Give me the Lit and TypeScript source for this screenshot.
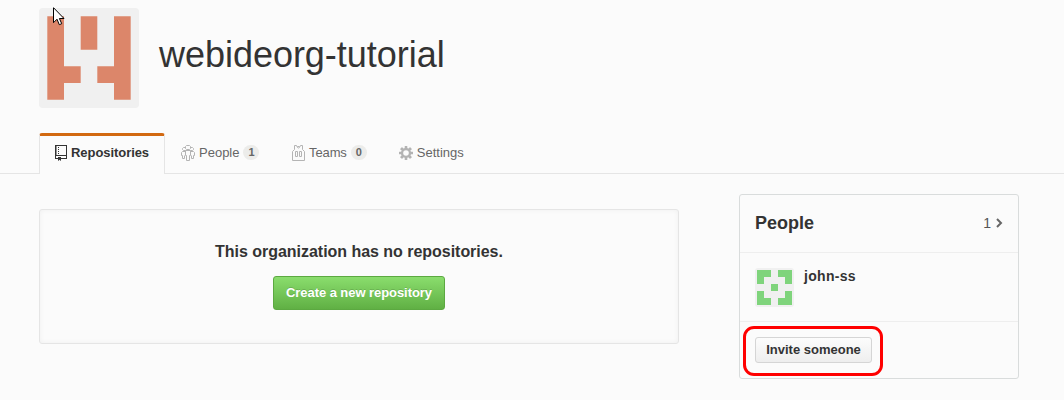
import { LitElement, html, css, svg } from "lit";
import { customElement } from "lit/decorators.js";

const repoIcon = html`<svg width="12" height="16" viewBox="0 0 12 16"><path fill="#333" fill-rule="evenodd" d="M0 0h12v14H6v2l-1.500-1.300L3 16v-2H0zM1.500 1v9H11V1zM1 11v2h2v-1h3v1h5v-2z"/><path fill="#333" d="M3 2h1v1H3zm0 2h1v1H3zm0 2h1v1H3zm0 2h1v1H3z"/></svg>`;

const peopleIcon = html`<svg width="14" height="16" viewBox="0 0 14 16" fill="none" stroke="#b4b4b4"><path d="M5.500.5h3l1 1v2l-1 1h-3l-1-1v-2zM4.500 2.500h-2l-1 1v1l1 1h2M9.500 2.500h2l1 1v1l-1 1h-2M4.500 5.500h5v5h-1v5h-3v-5h-1zM4.500 6.500h-3l-1 1v3h1v3h2v-3M9.500 6.500h3l1 1v3h-1v3h-2v-3"/></svg>`;

const teamsIcon = html`<svg width="13" height="16" viewBox="0 0 13 16" fill="none" stroke="#b4b4b4"><path d="M2.500.5h2l1 1h2l1-1h2v4l2 2v9H.5v-9l2-2zM3.500 6.500h2v5h-2zM7.500 6.500h2v5h-2z"/><path d="M4.500 1.500l2 1.500 2-1.500"/></svg>`;

const gearIcon = html`<svg width="14" height="14" viewBox="-7 -7 14 14"><g fill="#b3b3b3">${[0, 45, 90, 135].map((a) => svg`<rect x="-1.300" y="-7" width="2.600" height="14" rx=".3" transform="rotate(${a})"/>`)}<circle r="5.100"/></g><circle r="2.800" fill="#fbfbfb"/></svg>`;

@customElement("app-root")
export class AppRoot extends LitElement {
  static styles = css`
    :host { display: block; position: relative; height: 400px; overflow: hidden; background: #fbfbfb; color: #333; font: 13px/18px "Liberation Sans", Arial, sans-serif; }
    * { box-sizing: border-box; }
    svg { display: block; flex: none; }
    h1, h2, h3 { margin: 0; }
    .head { display: flex; gap: 20px; padding: 8px 0 0 39px; height: 133px; }
    .head h1 { font-weight: 400; font-size: 36px; line-height: 40px; padding-top: 27px; letter-spacing: -.03px; }
    .logo { border-radius: 3px; }
    .cursor { position: absolute; left: 53px; top: 7px; }
    .tabs { display: flex; height: 41px; border-bottom: 1px solid #e5e5e5; padding-left: 39px; color: #666; }
    .tab { display: flex; align-items: center; height: 38px; padding-top: 1px; }
    .tab.active { width: 126px; height: 41px; padding: 0 0 4px 15px; border: 1px solid #e5e5e5; border-top: 3px solid #d26911; border-bottom: 0; border-radius: 3px 3px 0 0; background: #fbfbfb; color: #333; font-weight: 700; letter-spacing: -.06px; gap: 4px; }
    .people { margin-left: 16px; gap: 4px; }
    .teams { margin-left: 33px; gap: 4px; }
    .teams span:first-of-type { letter-spacing: -.1px; margin-left: -.5px; }
    .settings { margin-left: 32px; gap: 4px; }
    .count { min-width: 16px; height: 15px; border-radius: 8px; background: #ececea; font-size: 11px; line-height: 15px; font-weight: 700; text-align: center; }
    .body { display: flex; align-items: flex-start; gap: 60px; padding: 20px 0 0 39px; }
    .blank { width: 640px; height: 135px; margin-top: 15px; border: 1px solid #e5e5e5; border-radius: 3px; box-shadow: inset 0 0 5px rgba(0,0,0,.05); display: flex; flex-direction: column; align-items: center; padding-top: 32px; }
    .blank h3 { font-size: 16px; line-height: 20px; letter-spacing: -.03px; }
    .create { width: 172px; height: 34px; margin-top: 14px; border: 1px solid #5ca941; border-radius: 3px; background: linear-gradient(#8add6d, #60b044); color: #fff; font-weight: 700; letter-spacing: -.06px; line-height: 32px; text-align: center; text-shadow: 0 -1px 0 rgba(0,0,0,.15); }
    .side { width: 280px; height: 185px; border: 1px solid #d9dcdc; border-radius: 3px; }
    .row { padding: 0 15px; border-bottom: 1px solid #eee; display: flex; }
    .title { height: 58px; align-items: center; justify-content: space-between; }
    .title h2 { font-size: 18px; padding-bottom: 2px; }
    .more { display: flex; align-items: center; gap: 5px; font-size: 14px; color: #555; padding-bottom: 1px; }
    .member { height: 69px; padding-top: 15px; gap: 10px; font-weight: 700; font-size: 14px; letter-spacing: .3px; line-height: 16px; }
    .last { height: 56px; border: 0; padding-top: 15px; }
    .invite { width: 117px; height: 26px; border: 1px solid #d5d5d5; border-radius: 3px; background: linear-gradient(#fcfcfc, #eee); font-weight: 700; line-height: 24px; text-align: center; }
    .mark { position: absolute; left: 743px; top: 326px; width: 140px; height: 50px; border: 3px solid #f00; border-radius: 11px; }
  `;

  render() {
    return html`
      <header class="head">
        <svg class="logo" width="100" height="100" viewBox="0 0 100 100"><rect width="100" height="100" rx="3" fill="#f0f0f0"/><path fill="#dc866a" d="M8.300 8.300H25v50h16.700V75H25v16.700H8.300zM41.700 8.300h16.600v33.400H41.700zM75 8.300h16.700v83.400H75V75H58.300V58.300H75z"/></svg>
        <h1>webideorg-tutorial</h1>
      </header>
      <nav class="tabs">
        <div class="tab active">${repoIcon}<span>Repositories</span></div>
        <div class="tab people">${peopleIcon}<span>People</span><span class="count">1</span></div>
        <div class="tab teams">${teamsIcon}<span>Teams</span><span class="count">0</span></div>
        <div class="tab settings">${gearIcon}<span>Settings</span></div>
      </nav>
      <main class="body">
        <section class="blank"><h3>This organization has no repositories.</h3><div class="create">Create a new repository</div></section>
        <aside class="side">
          <div class="row title"><h2>People</h2><span class="more">1<svg width="7" height="10" viewBox="0 0 7 10"><path d="M1 1l4 4-4 4" fill="none" stroke="#666" stroke-width="2"/></svg></span></div>
          <div class="row member"><svg width="39" height="39" viewBox="0 0 39 39"><rect width="39" height="39" rx="3" fill="#f0f0f0"/><path fill="#7fd47c" d="M2 2h14v7H9v7H2zM23 2h14v14h-7V9h-7zM16 16h7v7h-7zM2 23h7v7h7v7H2zM30 23h7v14H23v-7h7z"/></svg><span>john-ss</span></div>
          <div class="row last"><div class="invite">Invite someone</div></div>
        </aside>
      </main>
      <div class="mark"></div>
      <svg class="cursor" width="13" height="20" viewBox="0 0 13 20"><path d="M.5.700v15l3.500-3.500 2.300 5.500 2.400-1-2.300-5.200h4.600z" fill="#fff" stroke="#000"/></svg>
    `;
  }
}
